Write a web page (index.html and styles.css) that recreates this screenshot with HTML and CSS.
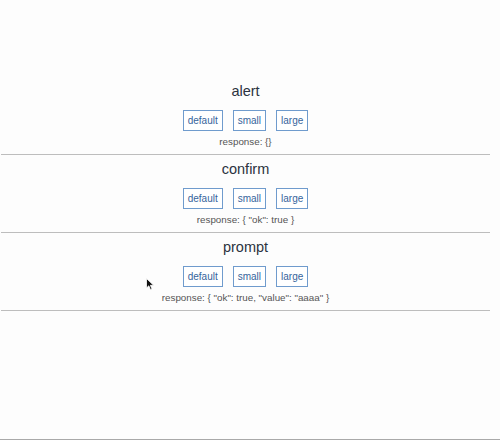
FILE: index.html
```html
<!DOCTYPE html>
<html>
<head>
<meta charset="utf-8">
<link rel="stylesheet" href="styles.css">
</head>
<body>
<div class="page">
  <div class="list">
    <section class="demo">
      <h3 class="title">alert</h3>
      <div class="buttons">
        <button class="btn">default</button>
        <button class="btn">small</button>
        <button class="btn">large</button>
      </div>
      <p class="response">response: {}</p>
    </section>
    <section class="demo">
      <h3 class="title">confirm</h3>
      <div class="buttons">
        <button class="btn">default</button>
        <button class="btn">small</button>
        <button class="btn">large</button>
      </div>
      <p class="response">response: { "ok": true }</p>
    </section>
    <section class="demo">
      <h3 class="title">prompt</h3>
      <div class="buttons">
        <button class="btn">default</button>
        <button class="btn">small</button>
        <button class="btn">large</button>
      </div>
      <p class="response">response: { "ok": true, "value": "aaaa" }</p>
    </section>
  </div>
  <svg class="cursor" width="9" height="13" viewBox="0 0 9 13"><path d="M0.5 0.5 L0.5 10 L2.8 7.8 L4.5 11.8 L6 11.1 L4.4 7.3 L7.6 7.3 Z" fill="#111" stroke="#fff" stroke-width="0.8"/></svg>
</div>
</body>
</html>
```
FILE: styles.css
```css
html, body {
  margin: 0;
  padding: 0;
}
body {
  background: #fdfdfd;
  font-family: "Liberation Sans", Arial, sans-serif;
}
.page {
  position: relative;
  width: 500px;
  height: 440px;
  box-sizing: border-box;
  border-bottom: 1px solid #a9a9a9;
  padding-top: 77px;
}
.list {
  margin-left: 1px;
  width: 489px;
}
.demo {
  padding: 4px 0 6px;
  border-bottom: 1px solid #bdbdbd;
  text-align: center;
}
.title {
  margin: 0 0 9px;
  font-size: 14.5px;
  line-height: 20px;
  font-weight: normal;
  color: #2b3340;
}
.buttons {
  display: flex;
  justify-content: center;
  gap: 10px;
}
.btn {
  height: 21px;
  padding: 0 4px;
  border: 1px solid #6f9bcd;
  background: #fff;
  color: #36649c;
  font-family: "Liberation Sans", Arial, sans-serif;
  font-size: 10px;
  line-height: 19px;
  border-radius: 0;
}
.response {
  margin: 4px 0 0;
  font-size: 9.8px;
  line-height: 13px;
  color: #555;
}
.cursor {
  position: absolute;
  left: 146px;
  top: 278px;
}
```
